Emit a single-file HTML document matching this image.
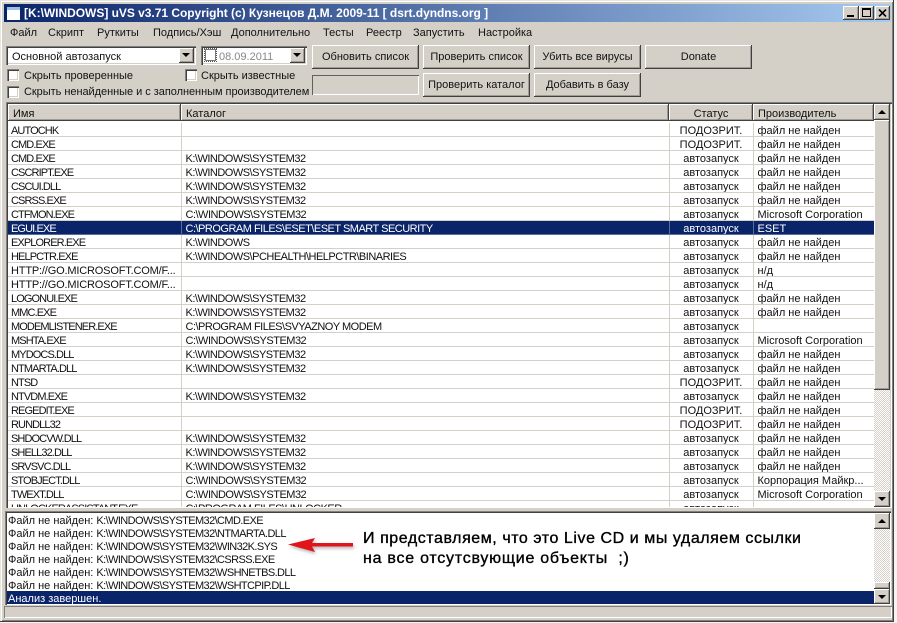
<!DOCTYPE html>
<html><head><meta charset="utf-8"><style>
html,body{margin:0;padding:0;background:#f4f4f2}
#w{position:relative;width:897px;height:623px;overflow:hidden;background:#f4f4f2;font:11px/14px "Liberation Sans","Noto Sans CJK SC",sans-serif;color:#111}
#w>*,.a{position:absolute}
.t{white-space:nowrap}
.b{box-sizing:border-box;background:#d4d0c8;box-shadow:inset -1px -1px #404040,inset 1px 1px #fff,inset -2px -2px #a09c94;text-align:center}
.s{box-sizing:border-box;box-shadow:inset 1px 1px #808080,inset 2px 2px #404040,inset -1px -1px #fff,inset -2px -2px #d4d0c8;background:#fff}
.c{width:12px;height:12px}
.ar{width:0;height:0;border-left:4px solid transparent;border-right:4px solid transparent;left:4px;position:absolute}
.dn{border-top:4px solid #000;top:6px}.up{border-bottom:4px solid #000;top:6px}
.track{background-color:#eceae5;background-image:repeating-conic-gradient(#d4d0c8 0 25%,#fff 0 50%);background-size:2px 2px}
table{border-collapse:collapse;table-layout:fixed;width:866px}
td{height:10px;padding:3px 0 0 3px;border:solid #d4d0c8;border-width:0 1px 1px 0;white-space:nowrap;overflow:hidden;line-height:10px;box-sizing:content-box}
td:nth-child(1){letter-spacing:-.9px}
td:nth-child(2){letter-spacing:-.5px;padding-left:4px}
td:nth-child(3){text-align:center;padding-left:0}
td:nth-child(4){padding-left:4px}
td.u{letter-spacing:-.17px}
tr.sel td{background:#0a246a;color:#fff;border-color:#5a6c9a}
.h{box-sizing:border-box;top:0;height:17px;line-height:20px;padding-left:5px}
.l{left:1px;height:13px;padding-top:2px;box-sizing:border-box;line-height:13px;white-space:nowrap}
.l span{letter-spacing:-.6px}
.bt{line-height:25px}
</style></head><body><div id="w">
<div style="left:0;top:0;width:894px;height:622px;box-sizing:border-box;background:#d4d0c8;box-shadow:inset -1px -1px #404040,inset 1px 1px #e8e6e0,inset 2px 2px #fff,inset -2px -2px #808080"></div>
<div style="left:4px;top:4px;width:887px;height:18px;background:linear-gradient(90deg,#0a246a,#a6caf0)"></div>
<div style="left:7px;top:7px;width:13px;height:13px;background:#fff;border-top:3px solid #9cc0ea;box-sizing:border-box"></div>
<div class="t" style="left:24px;top:5px;font:bold 12px/16px 'Liberation Sans',sans-serif;color:#fff;letter-spacing:-.03px">[K:\WINDOWS] uVS v3.71 Copyright (c) Кузнецов Д.М. 2009-11 [ dsrt.dyndns.org ]</div>
<div class="b" style="left:843px;top:6px;width:16px;height:14px"><div class="a" style="left:4px;top:9px;width:7px;height:2px;background:#000"></div></div>
<div class="b" style="left:859px;top:6px;width:15px;height:14px"><div class="a" style="left:3px;top:2px;width:9px;height:9px;border:1px solid #000;border-top-width:2px;box-sizing:border-box"></div></div>
<div class="b" style="left:875px;top:6px;width:15px;height:14px"><svg class="a" style="left:3px;top:3px" width="9" height="8"><path d="M1 0.5L8 7.5M8 0.5L1 7.5" stroke="#000" stroke-width="1.6"/></svg></div>

<div class="t" style="left:10px;top:26px">Файл</div><div class="t" style="left:48px;top:26px">Скрипт</div><div class="t" style="left:97px;top:26px">Руткиты</div><div class="t" style="left:153px;top:26px">Подпись/Хэш</div><div class="t" style="left:231px;top:26px">Дополнительно</div><div class="t" style="left:323px;top:26px">Тесты</div><div class="t" style="left:366px;top:26px">Реестр</div><div class="t" style="left:413px;top:26px">Запустить</div><div class="t" style="left:478px;top:26px">Настройка</div>

<div class="s" style="left:6px;top:46px;width:190px;height:19px"><div class="a t" style="left:6px;top:4px">Основной автозапуск</div><div class="b" style="position:absolute;left:173px;top:2px;width:15px;height:15px"><div class="ar dn" style="left:3px;top:5px"></div></div></div>
<div class="s" style="left:201px;top:46px;width:106px;height:19px;background:#fff"><div class="a" style="left:4px;top:3px;width:11px;height:12px;border:1px solid #777;box-sizing:border-box;outline:1px dotted #555"></div><div class="a t" style="left:18px;top:4px;color:#888">08.09.2011</div><div class="b" style="position:absolute;left:89px;top:2px;width:15px;height:15px"><div class="ar dn" style="left:3px;top:5px"></div></div></div>

<div class="s c" style="left:7px;top:69px"></div><div class="t" style="left:24px;top:69px">Скрыть проверенные</div>
<div class="s c" style="left:185px;top:69px"></div><div class="t" style="left:201px;top:69px">Скрыть известные</div>
<div class="s c" style="left:7px;top:86px"></div><div class="t" style="left:24px;top:85px;letter-spacing:-.04px">Скрыть ненайденные и с заполненным производителем</div>

<div class="b bt" style="left:312px;top:45px;width:107px;height:24px">Обновить список</div>
<div class="b bt" style="left:423px;top:45px;width:107px;height:24px">Проверить список</div>
<div class="b bt" style="left:534px;top:45px;width:107px;height:24px">Убить все вирусы</div>
<div class="b bt" style="left:645px;top:45px;width:107px;height:24px">Donate</div>
<div style="left:312px;top:75px;width:107px;height:20px;box-sizing:border-box;background:#d4d0c8;box-shadow:inset 1px 1px #606060,inset -1px -1px #fff"></div>
<div class="b bt" style="left:423px;top:73px;width:107px;height:24px">Проверить каталог</div>
<div class="b bt" style="left:534px;top:73px;width:107px;height:24px">Добавить в базу</div>

<div class="s" style="left:6px;top:102px;width:886px;height:406px"></div>
<div style="left:8px;top:104px;width:866px;height:403px;overflow:hidden;background:#fff">
<div class="b h" style="position:absolute;left:0;width:173px;text-align:left">Имя</div>
<div class="b h" style="position:absolute;left:173px;width:488px;text-align:left">Каталог</div>
<div class="b h" style="position:absolute;left:661px;width:84px;padding:0;text-align:center">Статус</div>
<div class="b h" style="position:absolute;left:745px;width:121px;text-align:left">Производитель</div>
<table style="position:absolute;left:0;top:19px"><colgroup><col style="width:173px"><col style="width:488px"><col style="width:84px"><col style="width:121px"></colgroup>
<tr><td>AUTOCHK</td><td></td><td>ПОДОЗРИТ.</td><td>файл не найден</td></tr>
<tr><td>CMD.EXE</td><td></td><td>ПОДОЗРИТ.</td><td>файл не найден</td></tr>
<tr><td>CMD.EXE</td><td>K:\WINDOWS\SYSTEM32</td><td>автозапуск</td><td>файл не найден</td></tr>
<tr><td>CSCRIPT.EXE</td><td>K:\WINDOWS\SYSTEM32</td><td>автозапуск</td><td>файл не найден</td></tr>
<tr><td>CSCUI.DLL</td><td>K:\WINDOWS\SYSTEM32</td><td>автозапуск</td><td>файл не найден</td></tr>
<tr><td>CSRSS.EXE</td><td>K:\WINDOWS\SYSTEM32</td><td>автозапуск</td><td>файл не найден</td></tr>
<tr><td>CTFMON.EXE</td><td>C:\WINDOWS\SYSTEM32</td><td>автозапуск</td><td>Microsoft Corporation</td></tr>
<tr class="sel"><td>EGUI.EXE</td><td>C:\PROGRAM FILES\ESET\ESET SMART SECURITY</td><td>автозапуск</td><td>ESET</td></tr>
<tr><td>EXPLORER.EXE</td><td>K:\WINDOWS</td><td>автозапуск</td><td>файл не найден</td></tr>
<tr><td>HELPCTR.EXE</td><td>K:\WINDOWS\PCHEALTH\HELPCTR\BINARIES</td><td>автозапуск</td><td>файл не найден</td></tr>
<tr><td class="u">HTTP://GO.MICROSOFT.COM/F...</td><td></td><td>автозапуск</td><td>н/д</td></tr>
<tr><td class="u">HTTP://GO.MICROSOFT.COM/F...</td><td></td><td>автозапуск</td><td>н/д</td></tr>
<tr><td>LOGONUI.EXE</td><td>K:\WINDOWS\SYSTEM32</td><td>автозапуск</td><td>файл не найден</td></tr>
<tr><td>MMC.EXE</td><td>K:\WINDOWS\SYSTEM32</td><td>автозапуск</td><td>файл не найден</td></tr>
<tr><td>MODEMLISTENER.EXE</td><td>C:\PROGRAM FILES\SVYAZNOY MODEM</td><td>автозапуск</td><td></td></tr>
<tr><td>MSHTA.EXE</td><td>C:\WINDOWS\SYSTEM32</td><td>автозапуск</td><td>Microsoft Corporation</td></tr>
<tr><td>MYDOCS.DLL</td><td>K:\WINDOWS\SYSTEM32</td><td>автозапуск</td><td>файл не найден</td></tr>
<tr><td>NTMARTA.DLL</td><td>K:\WINDOWS\SYSTEM32</td><td>автозапуск</td><td>файл не найден</td></tr>
<tr><td>NTSD</td><td></td><td>ПОДОЗРИТ.</td><td>файл не найден</td></tr>
<tr><td>NTVDM.EXE</td><td>K:\WINDOWS\SYSTEM32</td><td>автозапуск</td><td>файл не найден</td></tr>
<tr><td>REGEDIT.EXE</td><td></td><td>ПОДОЗРИТ.</td><td>файл не найден</td></tr>
<tr><td>RUNDLL32</td><td></td><td>ПОДОЗРИТ.</td><td>файл не найден</td></tr>
<tr><td>SHDOCVW.DLL</td><td>K:\WINDOWS\SYSTEM32</td><td>автозапуск</td><td>файл не найден</td></tr>
<tr><td>SHELL32.DLL</td><td>K:\WINDOWS\SYSTEM32</td><td>автозапуск</td><td>файл не найден</td></tr>
<tr><td>SRVSVC.DLL</td><td>K:\WINDOWS\SYSTEM32</td><td>автозапуск</td><td>файл не найден</td></tr>
<tr><td>STOBJECT.DLL</td><td>C:\WINDOWS\SYSTEM32</td><td>автозапуск</td><td>Корпорация Майкр...</td></tr>
<tr><td>TWEXT.DLL</td><td>C:\WINDOWS\SYSTEM32</td><td>автозапуск</td><td>Microsoft Corporation</td></tr>
<tr><td>UNLOCKERASSISTANT.EXE</td><td>C:\PROGRAM FILES\UNLOCKER</td><td>автозапуск</td><td></td></tr>
</table></div>
<div class="track" style="left:874px;top:104px;width:16px;height:403px"></div>
<div class="b" style="left:874px;top:104px;width:16px;height:16px"><div class="ar up"></div></div>
<div class="b" style="left:874px;top:120px;width:16px;height:270px"></div>
<div class="b" style="left:874px;top:491px;width:16px;height:16px"><div class="ar dn"></div></div>

<div class="s" style="left:5px;top:511px;width:886px;height:94px"></div>
<div style="left:7px;top:513px;width:867px;height:91px;background:#fff;overflow:hidden">
<div class="a l" style="top:0">Файл не найден: <span>K:\WINDOWS\SYSTEM32\CMD.EXE</span></div>
<div class="a l" style="top:13px">Файл не найден: <span>K:\WINDOWS\SYSTEM32\NTMARTA.DLL</span></div>
<div class="a l" style="top:26px">Файл не найден: <span>K:\WINDOWS\SYSTEM32\WIN32K.SYS</span></div>
<div class="a l" style="top:39px">Файл не найден: <span>K:\WINDOWS\SYSTEM32\CSRSS.EXE</span></div>
<div class="a l" style="top:52px">Файл не найден: <span>K:\WINDOWS\SYSTEM32\WSHNETBS.DLL</span></div>
<div class="a l" style="top:65px">Файл не найден: <span>K:\WINDOWS\SYSTEM32\WSHTCPIP.DLL</span></div>
<div class="a" style="left:0;top:78px;width:867px;height:13px;background:#0a246a;color:#fff;line-height:16px;padding-left:1px;box-sizing:border-box;white-space:nowrap">Анализ завершен.</div>
</div>
<div class="track" style="left:874px;top:513px;width:16px;height:91px"></div>
<div class="b" style="left:874px;top:513px;width:16px;height:16px"><div class="ar up"></div></div>
<div class="b" style="left:874px;top:582px;width:16px;height:7px"></div>
<div class="b" style="left:874px;top:589px;width:16px;height:15px"><div class="ar dn"></div></div>
<svg style="left:286px;top:534px;filter:drop-shadow(1px 2px 1.5px rgba(0,0,0,.3))" width="72" height="24" viewBox="0 0 72 24"><path d="M2 10.5 L29 4 L26 9 H67 V12.5 H26 L29 18Z" fill="#e0141a"/></svg>
<div class="t" style="left:363px;top:529px;font:16px/20px 'Liberation Sans',sans-serif;color:#000;-webkit-text-stroke:.35px #000;letter-spacing:.56px">И представляем, что это Live CD и мы удаляем ссылки</div>
<div class="t" style="left:363px;top:549px;font:16px/20px 'Liberation Sans',sans-serif;color:#000;-webkit-text-stroke:.35px #000;letter-spacing:.75px">на все отсутсвующие объекты&nbsp; ;)</div>
<div style="left:4px;top:606px;width:888px;height:12px;box-sizing:border-box;background:#d4d0c8;box-shadow:inset 1px 1px #808080,inset -1px -1px #fff"></div>
</div></body></html>
